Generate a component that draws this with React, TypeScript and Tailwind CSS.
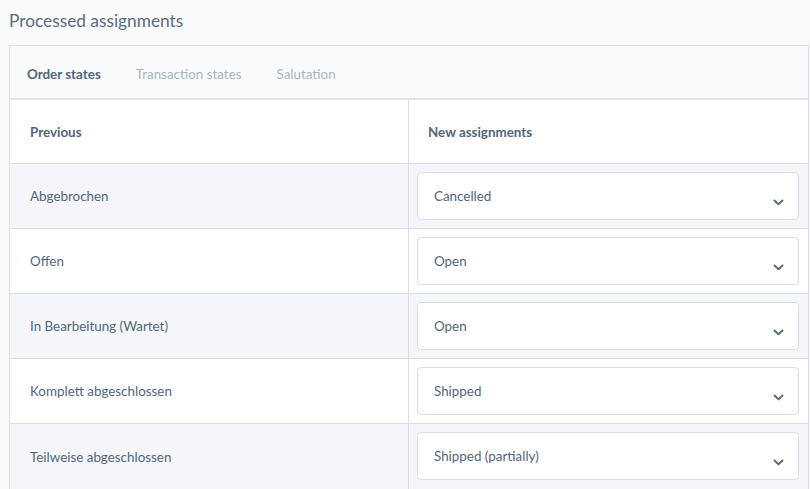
import React from "react";

const rows = [
  ["Abgebrochen", "Cancelled"],
  ["Offen", "Open"],
  ["In Bearbeitung (Wartet)", "Open"],
  ["Komplett abgeschlossen", "Shipped"],
  ["Teilweise abgeschlossen", "Shipped (partially)"],
];

function Chevron() {
  return (
    <svg width="11" height="7" viewBox="0 0 11 7" fill="none">
      <path d="M1.5 1.5 L5.5 5.2 L9.5 1.5" stroke="#5a6b7d" strokeWidth="2" strokeLinecap="round" strokeLinejoin="round" />
    </svg>
  );
}

export default function App() {
  return (
    <div
      className="w-[810px] h-[489px] overflow-hidden bg-[#f9fafb] text-[#52667a]"
      style={{ fontFamily: "Lato, 'Open Sans', sans-serif" }}
    >
      <div className="pl-[9px] pt-[9px] h-[45px] text-[17.3px] leading-[24px] text-[#5a6b7e]">
        Processed assignments
      </div>
      <div className="ml-[9px] w-[800px] border border-[#d9dde5] bg-white">
        <div className="flex items-center h-[54px] pl-[17px] pt-[4px] gap-[35px] bg-[#f9fafb] border-b-2 border-[#dfe3e8] text-[13.4px]">
          <span className="font-bold text-[#52667a]">Order states</span>
          <span className="text-[#a9b5c1]">Transaction states</span>
          <span className="text-[#a9b5c1]">Salutation</span>
        </div>
        <div className="grid grid-cols-[399px_1fr] h-[64px] border-b border-[#d9dde5] text-[13.4px] font-bold">
          <div className="flex items-center pl-[20px] pt-[2px] border-r border-[#d9dde5]">Previous</div>
          <div className="flex items-center pl-[19px] pt-[2px]">New assignments</div>
        </div>
        {rows.map(([a, b], i) => (
          <div
            key={i}
            className={
              "grid grid-cols-[399px_1fr] h-[65px] text-[13.4px] " +
              (i < rows.length - 1 ? "border-b border-[#d9dde5] " : "") +
              (i % 2 === 0 ? "bg-[#f4f6f9]" : "bg-white")
            }
          >
            <div className="flex items-center pl-[20px] pt-[1px] border-r border-[#d9dde5]">{a}</div>
            <div className="pl-[8px] pr-[9px] pt-[8px]">
              <div className="relative flex items-center h-[48px] pl-[16px] bg-white border border-[#d9dde5] rounded-[4px]">
                <span>{b}</span>
                <span className="absolute right-[14px] top-[26px]">
                  <Chevron />
                </span>
              </div>
            </div>
          </div>
        ))}
      </div>
    </div>
  );
}
